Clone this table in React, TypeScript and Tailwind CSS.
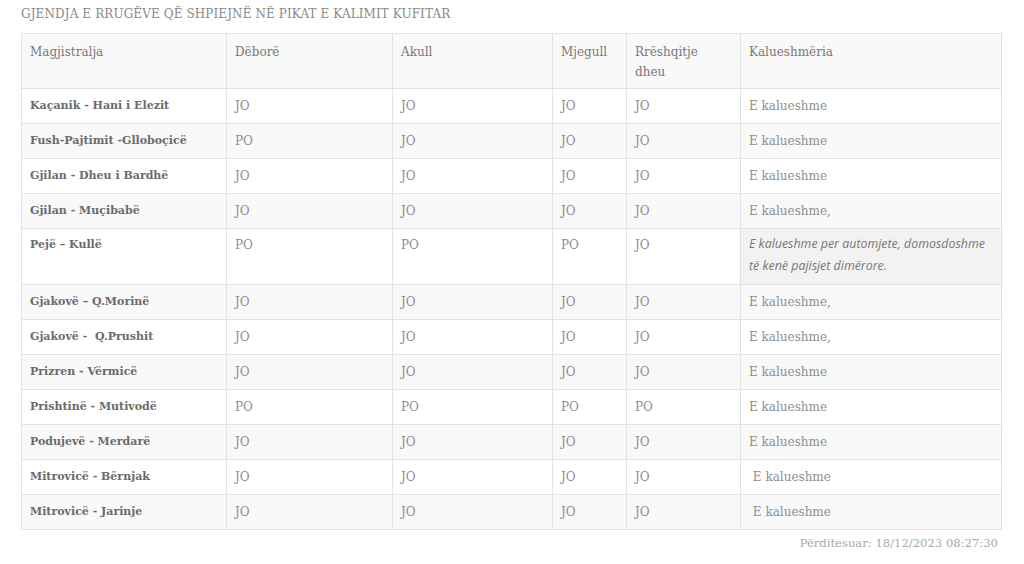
const rows: [string, string, string, string, string, string][] = [
  ["Kaçanik - Hani i Elezit", "JO", "JO", "JO", "JO", "E kalueshme"],
  ["Fush-Pajtimit -Glloboçicë", "PO", "JO", "JO", "JO", "E kalueshme"],
  ["Gjilan - Dheu i Bardhë", "JO", "JO", "JO", "JO", "E kalueshme"],
  ["Gjilan - Muçibabë", "JO", "JO", "JO", "JO", "E kalueshme,"],
  ["Pejë – Kullë", "PO", "PO", "PO", "JO", ""],
  ["Gjakovë – Q.Morinë", "JO", "JO", "JO", "JO", "E kalueshme,"],
  ["Gjakovë -  Q.Prushit", "JO", "JO", "JO", "JO", "E kalueshme,"],
  ["Prizren - Vërmicë", "JO", "JO", "JO", "JO", "E kalueshme"],
  ["Prishtinë - Mutivodë", "PO", "PO", "PO", "PO", "E kalueshme"],
  ["Podujevë - Merdarë", "JO", "JO", "JO", "JO", "E kalueshme"],
  ["Mitrovicë - Bërnjak", "JO", "JO", "JO", "JO", " E kalueshme"],
  ["Mitrovicë - Jarinje", "JO", "JO", "JO", "JO", " E kalueshme"],
];

const slab = "font-['DejaVu_Serif',serif]";

export default function App() {
  return (
    <div className={`bg-white w-[1024px] h-[564px] px-[21px] pt-[6px] ${slab}`}>
      <h2 className="text-[12px] leading-[16px] text-[#8a8a8a] mb-[11px] tracking-[0.1px]">
        GJENDJA E RRUGËVE QË SHPIEJNË NË PIKAT E KALIMIT KUFITAR
      </h2>

      <table className="w-[980px] table-fixed border-collapse text-[12px] leading-[20px]">
        <colgroup>
          <col className="w-[205px]" />
          <col className="w-[166px]" />
          <col className="w-[160px]" />
          <col className="w-[74px]" />
          <col className="w-[114px]" />
          <col className="w-[261px]" />
        </colgroup>
        <thead>
          <tr className="bg-[#f9f9f9] h-[55px] align-top text-[#777]">
            <th className="border border-[#e3e3e3] px-[8px] pt-[8px] pb-[6px] text-left font-normal">Magjistralja</th>
            <th className="border border-[#e3e3e3] px-[8px] pt-[8px] pb-[6px] text-left font-normal">Dëborë</th>
            <th className="border border-[#e3e3e3] px-[8px] pt-[8px] pb-[6px] text-left font-normal">Akull</th>
            <th className="border border-[#e3e3e3] px-[8px] pt-[8px] pb-[6px] text-left font-normal">Mjegull</th>
            <th className="border border-[#e3e3e3] px-[8px] pt-[8px] pb-[6px] text-left font-normal">
              Rrëshqitje
              <br />
              dheu
            </th>
            <th className="border border-[#e3e3e3] px-[8px] pt-[8px] pb-[6px] text-left font-normal">Kalueshmëria</th>
          </tr>
        </thead>
        <tbody>
          {rows.map((r, i) => (
            <tr
              key={r[0]}
              className={`${i % 2 === 1 ? "bg-[#f9f9f9]" : "bg-white"} ${i === 4 ? "h-[56px] align-top" : "h-[35px] align-middle"}`}
            >
              <td
                className={`border border-[#e3e3e3] px-[8px] text-[11px] font-bold text-[#6b6b6b] whitespace-pre ${i === 4 ? "pt-[6px]" : ""}`}
              >
                {r[0]}
              </td>
              {r.slice(1, 5).map((c, j) => (
                <td key={j} className={`border border-[#e3e3e3] px-[8px] text-[#8e8e8e] ${i === 4 ? "pt-[6px]" : ""}`}>
                  {c}
                </td>
              ))}
              {i === 4 ? (
                <td className="border border-[#e3e3e3] bg-[#f2f2f2] px-[8px] pt-[4px] font-['Open_Sans',sans-serif] italic text-[12.4px] leading-[22px] text-[#777]">
                  E kalueshme per automjete, domosdoshme të kenë pajisjet dimërore.
                </td>
              ) : (
                <td className="border border-[#e3e3e3] px-[8px] text-[#8e8e8e] whitespace-pre">{r[5]}</td>
              )}
            </tr>
          ))}
        </tbody>
      </table>

      <div className="flex justify-end pr-[5px] pt-[5px]">
        <span className="text-[11.6px] leading-[16px] text-[#a8a8a8]">Përditesuar: 18/12/2023 08:27:30</span>
      </div>
    </div>
  );
}
